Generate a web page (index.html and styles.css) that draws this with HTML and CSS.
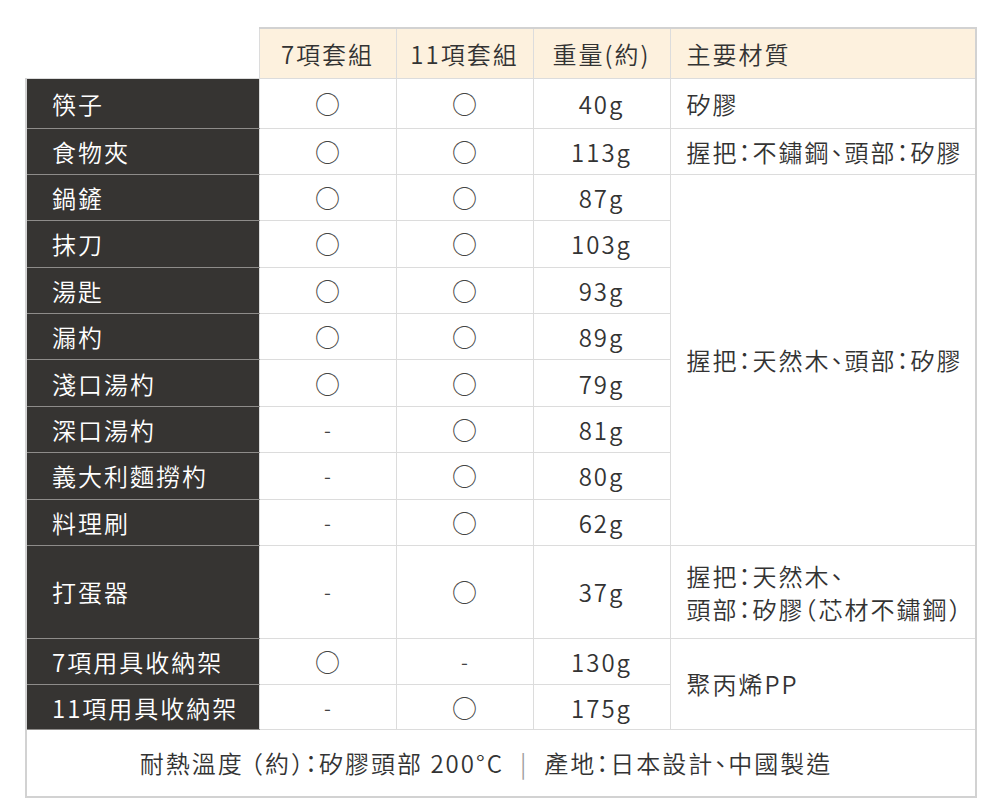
FILE: index.html
```html
<!DOCTYPE html>
<html lang="zh-Hant">
<head>
<meta charset="utf-8">
<title>規格表</title>
<link rel="stylesheet" href="styles.css">
</head>
<body>
<table class="spec">
  <colgroup>
    <col class="c-label"><col class="c-set"><col class="c-set"><col class="c-wt"><col class="c-mat">
  </colgroup>
  <thead>
    <tr class="r-head">
      <th class="corner"></th>
      <th class="h">7項套組</th>
      <th class="h">11項套組</th>
      <th class="h">重量(約)</th>
      <th class="h mat">主要材質</th>
    </tr>
  </thead>
  <tbody>
    <tr class="r-first">
      <th class="label">筷子</th><td class="mk">○</td><td class="mk">○</td><td class="wt">40g</td><td class="mat">矽膠</td>
    </tr>
    <tr>
      <th class="label">食物夾</th><td class="mk">○</td><td class="mk">○</td><td class="wt">113g</td><td class="mat">握把：不鏽鋼、頭部：矽膠</td>
    </tr>
    <tr>
      <th class="label">鍋鏟</th><td class="mk">○</td><td class="mk">○</td><td class="wt">87g</td><td class="mat" rowspan="8">握把：天然木、頭部：矽膠</td>
    </tr>
    <tr>
      <th class="label">抹刀</th><td class="mk">○</td><td class="mk">○</td><td class="wt">103g</td>
    </tr>
    <tr>
      <th class="label">湯匙</th><td class="mk">○</td><td class="mk">○</td><td class="wt">93g</td>
    </tr>
    <tr>
      <th class="label">漏杓</th><td class="mk">○</td><td class="mk">○</td><td class="wt">89g</td>
    </tr>
    <tr>
      <th class="label">淺口湯杓</th><td class="mk">○</td><td class="mk">○</td><td class="wt">79g</td>
    </tr>
    <tr>
      <th class="label">深口湯杓</th><td class="mk dash">-</td><td class="mk">○</td><td class="wt">81g</td>
    </tr>
    <tr>
      <th class="label">義大利麵撈杓</th><td class="mk dash">-</td><td class="mk">○</td><td class="wt">80g</td>
    </tr>
    <tr>
      <th class="label">料理刷</th><td class="mk dash">-</td><td class="mk">○</td><td class="wt">62g</td>
    </tr>
    <tr class="r-tall">
      <th class="label">打蛋器</th><td class="mk dash">-</td><td class="mk">○</td><td class="wt">37g</td><td class="mat">握把：天然木、<br>頭部：矽膠（芯材不鏽鋼）</td>
    </tr>
    <tr>
      <th class="label">7項用具收納架</th><td class="mk">○</td><td class="mk dash">-</td><td class="wt">130g</td><td class="mat" rowspan="2">聚丙烯PP</td>
    </tr>
    <tr class="r-last">
      <th class="label">11項用具收納架</th><td class="mk dash">-</td><td class="mk">○</td><td class="wt">175g</td>
    </tr>
  </tbody>
  <tfoot>
    <tr class="r-foot">
      <td class="foot" colspan="5">耐熱溫度 （約）：矽膠頭部 200°C<span class="sep">|</span>產地：日本設計、中國製造</td>
    </tr>
  </tfoot>
</table>
</body>
</html>
```
FILE: styles.css
```css
html, body {
  margin: 0;
  padding: 0;
  background: #ffffff;
}
body {
  padding: 27px 25px 0 25px;
  font-family: "Noto Sans CJK TC", "Noto Sans", sans-serif;
  color: #333333;
}
.spec {
  width: 950px;
  table-layout: fixed;
  border-collapse: collapse;
  border: 2px solid #d2d2d2;
  font-size: 24px;
  line-height: 33px;
  letter-spacing: 2px;
  font-feature-settings: "halt" 1;
}
.c-label { width: 233px; }
.c-set { width: 137px; }
.c-wt { width: 137px; }
.c-mat { width: 306px; }

.spec th, .spec td {
  border: 1px solid #dcdcdc;
  padding: 0;
  vertical-align: middle;
  font-weight: 350;
}
.spec .r-head { height: 50px; }
.spec .r-first { height: 50px; }
.spec tbody tr { height: 46.4px; }
.spec .r-tall { height: 92.6px; }
.spec .r-last { height: 45px; }
.spec .r-foot { height: 67px; }

.spec .corner {
  border-top-style: hidden;
  border-left-style: hidden;
  background: #ffffff;
}
.spec .h {
  background: #fdf1de;
  text-align: center;
  color: #333333;
}
.spec .h.mat { text-align: left; padding-left: 16px; }

.spec .label {
  background: #363432;
  color: #ffffff;
  text-align: left;
  padding-left: 25px;
  border-top-color: #8e8c8a;
  border-bottom-color: #8e8c8a;
}
.spec .mk {
  text-align: center;
  font-size: 25px;
  letter-spacing: 0;
  color: #444444;
}
.spec .mk.dash { font-size: 20px; }
.spec .wt { text-align: center; }
.spec .mat { text-align: left; padding-left: 16px; }
.spec .foot {
  text-align: center;
  padding-right: 30px;
}
.sep {
  color: #a0a0a0;
  margin: 0 16px;
}
```
